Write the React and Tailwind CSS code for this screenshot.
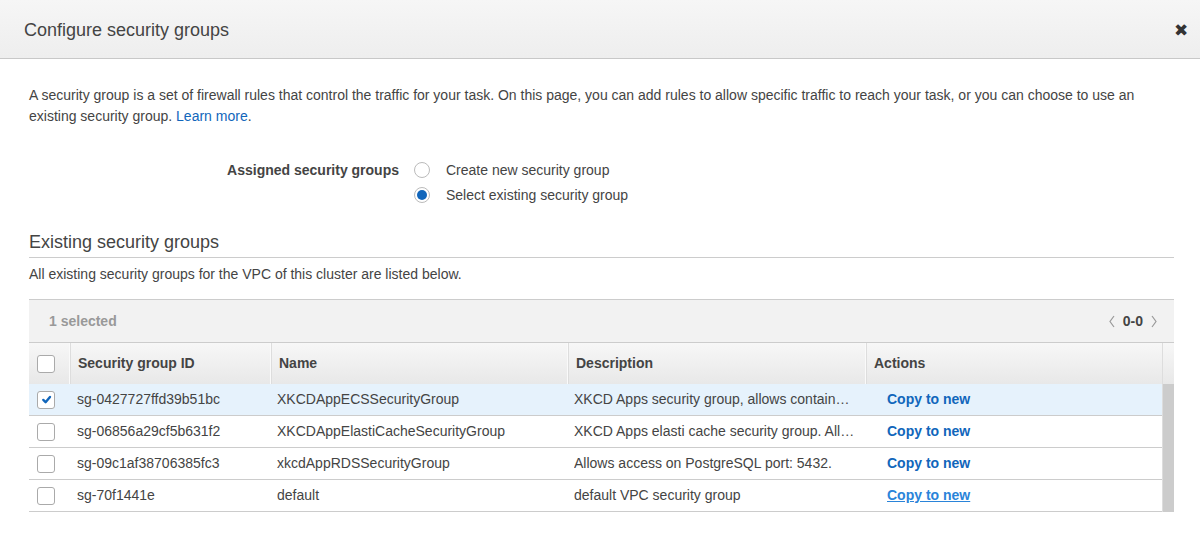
import React from 'react';

const rows = [
  { id: 'sg-0427727ffd39b51bc', name: 'XKCDAppECSSecurityGroup', desc: 'XKCD Apps security group, allows containers to communicate', checked: true },
  { id: 'sg-06856a29cf5b631f2', name: 'XKCDAppElastiCacheSecurityGroup', desc: 'XKCD Apps elasti cache security group. Allows access from ECS' },
  { id: 'sg-09c1af38706385fc3', name: 'xkcdAppRDSSecurityGroup', desc: 'Allows access on PostgreSQL port: 5432.' },
  { id: 'sg-70f1441e', name: 'default', desc: 'default VPC security group', hover: true },
];

function Check({ checked }) {
  return (
    <span className="flex h-[18px] w-[18px] items-center justify-center rounded-[3px] border border-[#aaa] bg-white">
      {checked && (
        <svg width="11" height="11" viewBox="0 0 12 12">
          <path d="M2.5 6.5 L5 9 L9.8 3.2" fill="none" stroke="#1166bb" strokeWidth="2.6" strokeLinecap="round" strokeLinejoin="round" />
        </svg>
      )}
    </span>
  );
}

function Radio({ on }) {
  return (
    <span className="flex h-4 w-4 items-center justify-center rounded-full border border-[#bbb] bg-white">
      {on && <span className="h-2.5 w-2.5 rounded-full bg-[#1166bb]" />}
    </span>
  );
}

function Chevron({ left }) {
  return (
    <svg width="8" height="16" viewBox="0 0 8 16">
      <path d={left ? 'M6 3 L2 8.5 L6 14' : 'M2 3 L6 8.5 L2 14'} fill="none" stroke="#999" strokeWidth="1.2" />
    </svg>
  );
}

export default function App() {
  const cols = 'grid grid-cols-[40px_201px_297px_298px_297px]';
  return (
    <div className="h-[533px] w-[1200px] bg-white text-[14px] text-[#444]" style={{ fontFamily: '"Liberation Sans", Arial, sans-serif' }}>
      <div className="flex h-[59px] items-center justify-between border-b border-[#c8c8c8] bg-gradient-to-b from-[#f6f6f6] to-[#eeeeee] pl-6 pr-3 pt-[2px]">
        <h2 className="text-[18px] text-[#444]">Configure security groups</h2>
        <span className="text-[17px] leading-none text-[#333]">✖</span>
      </div>

      <div className="pl-[29px] pr-[26px] pt-[26px]">
        <p className="pr-[3px] leading-[21px]">
          A security group is a set of firewall rules that control the traffic for your task. On this page, you can add rules to allow specific traffic to reach your task, or you can choose to use an existing security group. <span className="text-[#1166bb]">Learn more</span>.
        </p>

        <div className="mt-[30px] flex">
          <div className="w-[370px] pt-[4px] text-right font-bold leading-[18px]">Assigned security groups</div>
          <div className="ml-[15px] flex flex-col gap-[7px] pt-[4px]">
            <div className="flex h-[18px] items-center gap-4">
              <Radio />
              <span>Create new security group</span>
            </div>
            <div className="flex h-[18px] items-center gap-4">
              <Radio on />
              <span>Select existing security group</span>
            </div>
          </div>
        </div>

        <h3 className="mt-[27px] border-b border-[#ccc] pb-[4px] text-[18px] leading-[22px]">Existing security groups</h3>
        <p className="mt-[6px] leading-[21px]">All existing security groups for the VPC of this cluster are listed below.</p>

        <div className="mt-[14px] border-t border-[#ccc]">
          <div className="flex h-[42px] items-center justify-between bg-[#f2f2f2] pl-5 pr-4">
            <span className="font-bold text-[#999]">1 selected</span>
            <div className="flex items-center gap-[7px]">
              <Chevron left />
              <span className="font-bold text-[#444]">0-0</span>
              <Chevron />
            </div>
          </div>

          <div className="flex border-t border-[#ccc]">
            <div className="flex-1">
              <div className={`${cols} h-[41px] bg-gradient-to-b from-[#f7f7f7] to-[#e8e8e8] font-bold`}>
                <div className="flex items-center pl-2"><Check /></div>
                <div className="flex items-center border-l border-[#fafafa] pl-2 shadow-[inset_1px_0_0_#ddd]">Security group ID</div>
                <div className="flex items-center border-l border-[#fafafa] pl-2 shadow-[inset_1px_0_0_#ddd]">Name</div>
                <div className="flex items-center border-l border-[#fafafa] pl-2 shadow-[inset_1px_0_0_#ddd]">Description</div>
                <div className="flex items-center border-l border-[#fafafa] pl-2 shadow-[inset_1px_0_0_#ddd]">Actions</div>
              </div>
              {rows.map((r) => (
                <div key={r.id} className={`${cols} h-[32px] border-b border-[#ccc] ${r.checked ? 'bg-[#e6f2fc]' : 'bg-white'}`}>
                  <div className="flex items-center pl-2"><Check checked={r.checked} /></div>
                  <div className="flex items-center pl-2">{r.id}</div>
                  <div className="flex items-center pl-[7px]">{r.name}</div>
                  <div className="flex min-w-0 items-center pl-[7px] pr-2">
                    <span className="truncate">{r.desc}</span>
                  </div>
                  <div className="flex items-center pl-[22px]">
                    <span className={r.hover ? 'font-bold text-[#2a84d9] underline' : 'font-bold text-[#1166bb]'}>Copy to new</span>
                  </div>
                </div>
              ))}
            </div>
            <div className="flex w-3 flex-col border-l border-[#ddd]">
              <div className="h-[41px] bg-gradient-to-b from-[#f7f7f7] to-[#e8e8e8]" />
              <div className="h-[128px] bg-[#cccccc]" />
            </div>
          </div>
        </div>
      </div>
    </div>
  );
}
